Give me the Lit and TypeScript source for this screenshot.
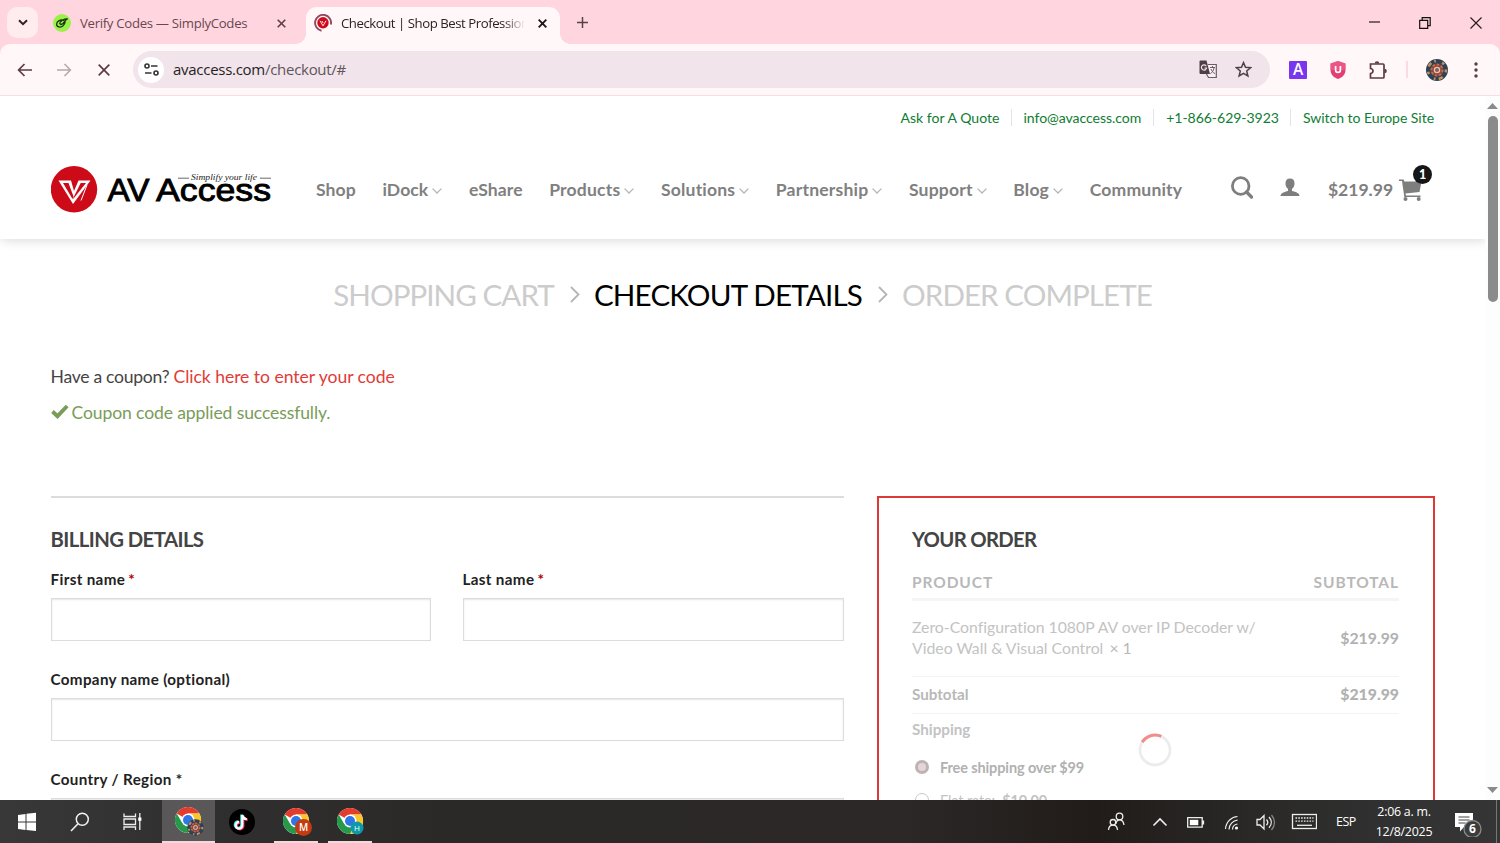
import { LitElement, html, css, svg } from "lit";
import { customElement } from "lit/decorators.js";

const NAV: [string, boolean][] = [
  ["Shop", false], ["iDock", true], ["eShare", false], ["Products", true], ["Solutions", true],
  ["Partnership", true], ["Support", true], ["Blog", true], ["Community", false],
];

const chevron = html`<svg class="chev" width="10" height="6" viewBox="0 0 10 6"><path d="M.6 .6 5 5 9.4 .6" fill="none" stroke="#b5b5b5" stroke-width="1.3"/></svg>`;

const mandala = (cx: number, cy: number, r: number) => svg`
  <circle cx=${cx} cy=${cy} r=${r} fill="#2b4258"/>
  <circle cx=${cx} cy=${cy} r=${r * 0.82} fill="none" stroke="#c98f55" stroke-width=${r * 0.24} stroke-dasharray=${`${r * 0.22} ${r * 0.5} ${r * 0.4} ${r * 0.3} ${r * 0.15} ${r * 0.6}`}/>
  <circle cx=${cx} cy=${cy} r=${r * 0.6} fill="#8c4638"/>
  <circle cx=${cx} cy=${cy} r=${r * 0.5} fill="none" stroke="#b8705a" stroke-width=${r * 0.18} stroke-dasharray=${`${r * 0.2} ${r * 0.18}`}/>
  <circle cx=${cx} cy=${cy} r=${r * 0.24} fill="#8a5a63" stroke="#ecc3a6" stroke-width=${r * 0.12}/>`;

const chromeLogo = svg`
  <circle cx="13" cy="13" r="13" fill="#fff"/>
  <path d="M13 13 1.74 6.5A13 13 0 0 1 24.26 6.5L13 6.5Z" fill="#e33b2e"/>
  <path d="M1.74 6.5A13 13 0 0 0 13 26L18.6 16.2 13 13 7.4 16.2Z" fill="#27994a"/>
  <path d="M24.26 6.5A13 13 0 0 1 13 26L18.6 16.2 18 8 13 6.5Z" fill="#fcc629"/>
  <circle cx="13" cy="13" r="6.5" fill="#fff"/>
  <circle cx="13" cy="13" r="5" fill="#2f76e6"/>`;

@customElement("browser-frame")
class BrowserFrame extends LitElement {
  static styles = css`
    :host { display: block; font-family: "Open Sans", "Noto Sans", sans-serif; color: #3c3035; }
    svg { display: block; flex: none; }
    .strip { height: 44px; background: #ffd6df; display: flex; align-items: flex-start; }
    .drop { width: 31px; height: 31px; margin: 7px 0 0 7px; border-radius: 10px; background: #ffecef; display: grid; place-items: center; }
    .tab { display: flex; align-items: center; height: 37px; margin-top: 7px; font-size: 13.2px; box-sizing: border-box; }
    .tab.idle { width: 266px; padding: 0 0 5px 15px; color: #6a4650; }
    .tab.idle .label { width: 197px; margin-left: 9px; letter-spacing: -0.31px; }
    .tab.live { width: 254px; margin-left: 2px; background: #fff7f8; border-radius: 11px 11px 0 0; padding: 0 0 5px 8px; position: relative; color: #2a2225; }
    .tab.live::before, .tab.live::after { content: ""; position: absolute; bottom: 0; width: 10px; height: 10px; }
    .tab.live::before { left: -10px; background: radial-gradient(circle at 0 0, transparent 9.5px, #fff7f8 10px); }
    .tab.live::after { right: -10px; background: radial-gradient(circle at 100% 0, transparent 9.5px, #fff7f8 10px); }
    .tab.live .label { width: 184px; margin: 0 13px 0 9px; letter-spacing: -0.46px; overflow: hidden; -webkit-mask: linear-gradient(90deg, #000 162px, transparent 184px); }
    .label { white-space: nowrap; line-height: 20px; }
    .plus { margin: 17px 0 0 17px; }
    .window { margin: 16px 18.500px 0 auto; display: flex; gap: 39px; align-items: center; }
    .barwrap { background: #ffd6df; }
    .bar { height: 51px; background: #fff7f8; border-bottom: 1px solid #f6dde1; display: flex; align-items: center; border-radius: 10px 10px 0 0; }
    .back { margin-left: 17px; }
    .fwd { margin-left: 25px; }
    .stop { margin-left: 26px; }
    .omni { margin-left: 23px; width: 1137px; height: 37px; border-radius: 19px; background: #f1e4ea; display: flex; align-items: center; box-sizing: border-box; padding: 0 18px 0 5px; }
    .site { width: 26px; height: 26px; border-radius: 50%; background: #fff; display: grid; place-items: center; }
    .url { margin-left: 9px; font-size: 15px; letter-spacing: -0.28px; line-height: 20px; color: #62545c; margin-top: -1px; }
    .url b { font-weight: 400; color: #261f24; }
    .gt { margin-left: auto; }
    .star { margin-left: 17px; }
    .exta { margin-left: 19px; } .extu { margin-left: 23px; } .extp { margin-left: 23px; }
    .sep { width: 2px; height: 17px; background: #ffd9e0; margin: 0 18px 0 18px; }
    .more { margin-left: 26px; }
  `;
  render() {
    return html`
      <div class="strip">
        <div class="drop"><svg width="10" height="7" viewBox="0 0 10 7"><path d="M1 1.2 5 5.2 9 1.2" fill="none" stroke="#2d2226" stroke-width="2"/></svg></div>
        <div class="tab idle">
          <svg width="18" height="18" viewBox="0 0 18 18"><circle cx="9" cy="9" r="9" fill="#9cf04a"/><path d="M11.200 6.400C7.800 4.900 3.600 7.200 3.600 10.300c0 3 4.400 3.600 6.400 1.600 1.300-1.300 2-3 2.300-4.600M6.300 9.300l1.900 1.300c1.500-.6 3-2.200 4-4l2.200-1.800-2.700.4c-2 .6-3.900 2-5 3.500" fill="none" stroke="#17330f" stroke-width="1.300" stroke-linejoin="round"/></svg>
          <span class="label">Verify Codes — SimplyCodes</span>
          <svg width="9" height="9" viewBox="0 0 9 9"><path d="m.7.7 7.600 7.600M8.300.7.7 8.300" stroke="#5f3e48" stroke-width="1.600"/></svg>
        </div>
        <div class="tab live">
          <svg width="18" height="18" viewBox="0 0 18 18"><path d="M7.500 16.700A8 8 0 1 1 16.900 10.500" fill="none" stroke="#8d4a60" stroke-width="1.900"/><circle cx="9" cy="8.800" r="5.700" fill="#cf0a1a"/><path d="m6 6.800 3 5 3-5M8 7l1 2" fill="none" stroke="#fff" stroke-width=".9"/></svg>
          <span class="label">Checkout | Shop Best Professional AV</span>
          <svg width="9" height="9" viewBox="0 0 9 9"><path d="m.7.7 7.600 7.600M8.300.7.7 8.300" stroke="#1d1719" stroke-width="1.900"/></svg>
        </div>
        <svg class="plus" width="11" height="11" viewBox="0 0 11 11"><path d="M5.500 0v11M0 5.500h11" stroke="#59404a" stroke-width="1.500"/></svg>
        <div class="window">
          <svg width="11" height="13" viewBox="0 0 11 13"><path d="M0 6h11" stroke="#221a1d" stroke-width="1.200"/></svg>
          <svg width="12" height="12" viewBox="0 0 12 12"><path d="M.7 3.300h8v8h-8zM3.200 3.200V.7h8v8H8.800" fill="none" stroke="#111" stroke-width="1.200"/></svg>
          <svg width="12" height="12" viewBox="0 0 12 12"><path d="m.5.5 11 11M11.500.5l-11 11" stroke="#221a1d" stroke-width="1.100"/></svg>
        </div>
      </div>
      <div class="barwrap"><div class="bar">
        <svg class="back" width="15" height="14" viewBox="0 0 15 14"><path d="M7.500 1 1.600 7l5.900 6M2 7h13" fill="none" stroke="#5c3b46" stroke-width="1.700"/></svg>
        <svg class="fwd" width="15" height="14" viewBox="0 0 15 14"><path d="M7.500 1l5.900 6-5.900 6M13 7H0" fill="none" stroke="#b7a8ad" stroke-width="1.600"/></svg>
        <svg class="stop" width="12" height="12" viewBox="0 0 12 12"><path d="m.7.7 10.600 10.600M11.300.7.7 11.300" stroke="#5c3b46" stroke-width="1.700"/></svg>
        <div class="omni">
          <div class="site"><svg width="15" height="13" viewBox="0 0 15 13"><circle cx="3" cy="3" r="2" fill="none" stroke="#333" stroke-width="1.600"/><circle cx="12" cy="10" r="2" fill="none" stroke="#333" stroke-width="1.600"/><path d="M7 3h6.500M1 10h6.500" stroke="#333" stroke-width="1.700"/></svg></div>
          <span class="url"><b>avaccess.com</b>/checkout/#</span>
          <svg class="gt" width="19" height="19" viewBox="0 0 19 19"><path d="M9 4.500h8.300v13H9.500L7.500 14" fill="#f8eff3" stroke="#6e5c64" stroke-width="1.200"/><path d="M1.500.5h6l3.500 13.500H1.500A1 1 0 0 1 .5 13V1.500a1 1 0 0 1 1-1Z" fill="#503e47"/><path d="M7.300 6.200A2.600 2.600 0 1 0 7.600 8H5.400" fill="none" stroke="#f1e4ea" stroke-width="1.200"/><path d="M11 7.500h5M13.500 6v1.500M15 8c-.5 2.700-2 4.700-3.700 5.800M12 9c.7 2 2.200 3.700 4 4.600" fill="none" stroke="#6e5c64"/></svg>
          <svg class="star" width="17" height="17" viewBox="0 0 17 17"><path d="m8.500 1.600 2 4.700 5.100.4-3.900 3.300 1.200 5-4.400-2.700L4.100 15l1.200-5L1.400 6.700l5.100-.4Z" fill="none" stroke="#51404a" stroke-width="1.500"/></svg>
        </div>
        <svg class="exta" width="18" height="18" viewBox="0 0 18 18"><rect width="18" height="18" rx="1" fill="#7a35ee"/><text x="9" y="14.300" text-anchor="middle" font-family="Open Sans, sans-serif" font-size="15.500" font-weight="600" fill="#fff">A</text></svg>
        <svg class="extu" width="16" height="18" viewBox="0 0 16 18"><path d="m8 0 7.500 2.500V9c0 5-4 7.700-7.500 9C4.500 16.700.5 14 .5 9V2.500Z" fill="#e23f75"/><path d="M8 0 .5 2.500V9h15V2.500Z" fill="#f0688f" opacity=".6"/><path d="M5.600 5v4a2.400 2.400 0 0 0 4.800 0V5" fill="none" stroke="#fff" stroke-width="1.700"/></svg>
        <svg class="extp" width="19" height="18" viewBox="0 0 19 18"><path d="M1.500 3h12.500a1 1 0 0 1 1 1v12a1 1 0 0 1-1 1H1.500v-4.500a2.500 2.500 0 0 0 0-5Z" fill="none" stroke="#5c3b46" stroke-width="1.700"/><path d="M5.700 2.500a2.300 2.300 0 0 1 4.600 0ZM15.500 7.700a2.300 2.300 0 0 1 0 4.600Z" fill="#5c3b46"/></svg>
        <div class="sep"></div>
        <svg width="22" height="22" viewBox="0 0 22 22">${mandala(11, 11, 11)}</svg>
        <svg class="more" width="4" height="16" viewBox="0 0 4 16"><g fill="#5c3b46"><circle cx="2" cy="2" r="1.700"/><circle cx="2" cy="8" r="1.700"/><circle cx="2" cy="14" r="1.700"/></g></svg>
      </div></div>`;
  }
}

@customElement("shop-header")
class ShopHeader extends LitElement {
  static styles = css`
    :host { display: block; height: 143px; background: #fff; box-shadow: 1px 1px 11px rgba(0,0,0,.16); position: relative; font-family: Lato, sans-serif; }
    svg { display: block; flex: none; }
    .top { height: 43px; padding-bottom: 1px; box-sizing: border-box; margin-bottom: 1px; display: flex; justify-content: flex-end; align-items: center; padding-right: 51px; }
    .top span { font-size: 14.05px; line-height: 17px; color: #0f7d33; letter-spacing: -0.05px; white-space: nowrap; }
    .top span + span { margin-left: 11px; padding-left: 12px; border-left: 1px solid #e4e4e4; }
    .top span:first-child { letter-spacing: 0.02px; }
    .top span:nth-child(3) { margin-left: 12px; }
    .main { height: 98px; display: flex; align-items: center; padding-left: 51px; }
    .logo { width: 265px; }
    .nav { display: flex; height: 98px; align-items: center; padding-top: 2px; box-sizing: border-box; }
    .item { display: flex; align-items: center; margin-right: 26.6px; font-size: 17.57px; letter-spacing: 0.18px; font-weight: 700; color: #808080; line-height: 22px; white-space: nowrap; }
    .item:nth-child(-n+3) { letter-spacing: 0.08px; }
    .chev { margin: 1px 0 0 4px; }
    .search { margin: -3px 0 0 22px; }
    .user { margin: -3px 0 0 27px; }
    .cash { margin: 2px 0 0 28px; font-size: 17.57px; font-weight: 700; color: #808080; line-height: 22px; }
    .cart { margin: 2px 0 0 6px; position: relative; }
    .badge { position: absolute; left: 14px; top: -14px; width: 19px; height: 19px; border-radius: 50%; background: #161616; color: #fff; font-size: 12.500px; font-weight: 900; line-height: 19px; text-align: center; }
  `;
  render() {
    return html`
      <div class="top"><span>Ask for A Quote</span><span>info@avaccess.com</span><span>+1-866-629-3923</span><span>Switch to Europe Site</span></div>
      <div class="main">
        <svg class="logo" width="265" height="50" viewBox="0 0 265 50">
          <circle cx="23" cy="25.300" r="23.200" fill="#cc0a18"/>
          <path d="M7.500 16.500h12.500l3 10.500 4.500-10.500H39.500L22 40ZM12 19 21.500 35l1-2.500L17.500 19ZM29.700 19 22.500 33.500 21.800 35.500 35 19Z" fill="#fff" fill-rule="evenodd"/>
          <path d="m36 21-6 15.500" stroke="#fff" stroke-width="1" fill="none"/>
          <g font-family="Liberation Sans, sans-serif" font-size="32" font-weight="400" fill="#000" stroke="#000" stroke-width=".9">
            <text x="56.500" y="36.500" textLength="42" lengthAdjust="spacingAndGlyphs">AV</text>
            <text x="105" y="36.500" textLength="115" lengthAdjust="spacingAndGlyphs">Access</text>
          </g>
          <text x="140" y="16.300" font-family="Liberation Serif, serif" font-style="italic" font-size="7.500" textLength="66" lengthAdjust="spacingAndGlyphs" fill="#222">Simplify your life</text>
          <path d="M127 14.200h11M209 14.200h11" stroke="#444" stroke-width=".8"/>
        </svg>
        <div class="nav">${NAV.map(([t, c]) => html`<div class="item">${t}${c ? chevron : ""}</div>`)}</div>
        <svg class="search" width="22" height="23" viewBox="0 0 22 23"><circle cx="9.700" cy="10" r="8.300" fill="none" stroke="#7e7e7e" stroke-width="2.800"/><path d="m15.500 16 5 5" stroke="#7e7e7e" stroke-width="3.300" stroke-linecap="round"/></svg>
        <svg class="user" width="20" height="19" viewBox="0 0 20 19"><path d="M10 .5c3 0 4.500 1.800 4.500 5 0 2.400-1 4.300-2.500 5.300v2.100c3.500.7 7.500 2 7.500 5.100H.5C.5 15 4.500 13.600 8 12.900v-2.100C6.500 9.800 5.500 7.900 5.500 5.500c0-3.200 1.500-5 4.500-5Z" fill="#7e7e7e"/></svg>
        <span class="cash">$219.99</span>
        <div class="cart"><svg width="23" height="22" viewBox="0 0 23 22"><path d="M0 .5h4.700l.7 2H22.500l-2 10.500L6.500 14.500l.5 2h14.500v1.600H5.300L3 2H0Z" fill="#7e7e7e"/><circle cx="6.500" cy="20" r="2" fill="#7e7e7e"/><circle cx="19.700" cy="20" r="2" fill="#7e7e7e"/></svg><span class="badge">1</span></div>
      </div>`;
  }
}

@customElement("checkout-page")
class CheckoutPage extends LitElement {
  static styles = css`
    :host { display: block; font-family: Lato, sans-serif; color: #444; }
    svg { display: block; flex: none; }
    .crumbs { display: flex; justify-content: center; align-items: center; margin-top: 35px; height: 40px; font-size: 29.6px; color: #ccc; letter-spacing: -0.95px; white-space: nowrap; }
    .crumbs b { font-weight: 400; color: #000; letter-spacing: -0.82px; }
    .crumbs svg { margin: 1px 14px 0 16px; }
    .notes { padding: 51px 51px 0 50.5px; font-size: 17.57px; line-height: 24px; }
    .ask { letter-spacing: -0.27px; }
    .red { color: #e03c38; letter-spacing: -0.04px; }
    .ok { display: flex; margin-top: 12px; color: #7a9c59; gap: 3px; letter-spacing: -0.12px; }
    .ok svg { margin-top: 3px; }
    .cols { display: flex; margin: 71px 50px 0 51px; gap: 33px; align-items: flex-start; }
    .form { width: 793px; border-top: 2px solid #dcdcdc; }
    h3 { margin: 0 0 0 -0.5px; font-size: 20.3px; line-height: 26px; font-weight: 700; color: #444; letter-spacing: -0.56px; }
    .form h3 { margin-top: 28px; }
    .row { display: grid; grid-template-columns: 380px 381px; gap: 32px; }
    .field { margin-bottom: 28px; }
    .form h3 + .row { margin-top: 17px; }
    .label { font-size: 15.2px; line-height: 20px; font-weight: 700; color: #222; display: block; letter-spacing: 0.35px; margin-left: -0.5px; }
    .req { color: #b20000; margin-left: -1px; }
    .input { height: 43px; box-sizing: border-box; border: 1px solid #dcdcdc; box-shadow: inset 0 1px 2px rgba(0,0,0,.1); margin-top: 9px; }
    .order { flex: 1; border: 2px solid #dd3a37; padding: 28px 34px 0 33px; height: 400px; box-sizing: border-box; position: relative; }
    .order h3 { letter-spacing: -0.7px; margin-left: 0; }
    .line { display: flex; justify-content: space-between; align-items: center; box-sizing: border-box; font-size: 15.800px; }
    .head { height: 42px; padding-top: 6px; margin-top: 7px; border-bottom: 3px solid #f5f5f5; font-weight: 700; color: #b8b8b8; letter-spacing: 0.9px; font-size: 15.500px; }
    .prod { height: 76px; padding-bottom: 3px; border-bottom: 1px solid #f3f3f3; color: #c3c3c3; line-height: 21px; }
    .line b { color: #b1b1b1; }
    .name { letter-spacing: -0.01px; }
    .qty { color: #b8b8b8; margin-left: -2px; }
    .sub { height: 37px; padding-bottom: 3px; border-bottom: 1px solid #f3f3f3; font-weight: 700; color: #b8b8b8; }
    .sub span, .ship { font-size: 15.200px; }
    .ship { font-weight: 700; color: #c3c3c3; line-height: 20px; margin-top: 5px; }
    .opt { display: flex; align-items: center; gap: 11px; margin-left: 3px; height: 20px; font-size: 14.500px; font-weight: 700; color: #b1b1b1; white-space: nowrap; letter-spacing: -0.12px; }
    .opt.first { margin-top: 18px; }
    .opt.second { margin-top: 13px; font-weight: 400; color: #c3c3c3; }
    .dot { width: 14px; height: 14px; box-sizing: border-box; border: 3px solid #bdb3b4; border-radius: 50%; background: #e5d5d7; }
    .dot.off { border: 1px solid #c8c8c8; background: #fff; }
    .spin { position: absolute; left: 258.500px; top: 235px; }
  `;
  render() {
    const gt = html`<svg width="10" height="17" viewBox="0 0 10 17"><path d="m1 1 7.500 7.500L1 16" fill="none" stroke="#b5b5b5" stroke-width="1.800"/></svg>`;
    return html`
      <div class="crumbs"><span>SHOPPING CART</span>${gt}<b>CHECKOUT DETAILS</b>${gt}<span>ORDER COMPLETE</span></div>
      <div class="notes">
        <div><span class="ask">Have a coupon? </span><span class="red">Click here to enter your code</span></div>
        <div class="ok"><svg width="18" height="15" viewBox="0 0 18 15"><path d="m1.500 7.500 5 4.700L16.200 2" fill="none" stroke="#7a9c59" stroke-width="3.900"/></svg>Coupon code applied successfully.</div>
      </div>
      <div class="cols">
        <div class="form">
          <h3>BILLING DETAILS</h3>
          <div class="row">
            <div class="field"><span class="label">First name <span class="req">*</span></span><div class="input"></div></div>
            <div class="field"><span class="label">Last name <span class="req">*</span></span><div class="input"></div></div>
          </div>
          <div class="field"><span class="label">Company name (optional)</span><div class="input"></div></div>
          <div class="field"><span class="label">Country / Region *</span><div class="input"></div></div>
        </div>
        <div class="order">
          <h3>YOUR ORDER</h3>
          <div class="line head"><span>PRODUCT</span><span>SUBTOTAL</span></div>
          <div class="line prod"><span class="name">Zero-Configuration 1080P AV over IP Decoder w/<br>Video Wall &amp; Visual Control&nbsp; <span class="qty">× 1</span></span><b>$219.99</b></div>
          <div class="line sub"><span>Subtotal</span><b>$219.99</b></div>
          <div class="ship">Shipping</div>
          <div class="opt first"><i class="dot"></i><span>Free shipping over $99</span></div>
          <div class="opt second"><i class="dot off"></i><span>Flat rate: &nbsp;<b>$10.00</b></span></div>
          <svg class="spin" width="34" height="34" viewBox="0 0 34 34"><circle cx="17" cy="17" r="15" fill="none" stroke="#ececec" stroke-width="2.800"/><path d="M4.200 9.200A15 15 0 0 1 23.300 3.400" fill="none" stroke="#f08e8c" stroke-width="3.200"/></svg>
        </div>
      </div>`;
  }
}

@customElement("task-bar")
class TaskBar extends LitElement {
  static styles = css`
    :host { display: flex; height: 43px; background: linear-gradient(90deg, #383838, #302f2f 14%, #2b2928 30%, #2b2827 60%, #211c1a 73%, #292827 83%, #333 95%, #353535); color: #fff; font-family: "Open Sans", "Noto Sans", sans-serif; align-items: center; justify-content: space-between; }
    svg { display: block; flex: none; }
    .left { display: flex; height: 43px; align-items: center; }
    .app { height: 43px; width: 44px; margin-left: 10px; padding: 3px 0 0 2px; box-sizing: border-box; display: grid; place-items: center; border-bottom: 2px solid transparent; }
    .run { border-bottom-color: #f3dad8; }
    .now { width: 53px; margin-left: 0; padding-left: 3px; background: #595757; }
    .tik { margin-left: 5px; padding-left: 0; }
    .right { display: flex; height: 43px; align-items: center; }
    .esp { font-size: 12.500px; letter-spacing: -0.5px; margin-left: 19px; width: 21px; }
    .clock { margin-left: 16px; width: 62px; text-align: center; font-size: 12.4px; line-height: 20px; letter-spacing: -0.25px; white-space: nowrap; }
    .bell { margin-left: 20px; }
    .edge { width: 1px; height: 43px; background: #777; margin: 0 3px 0 14px; }
  `;
  render() {
    return html`
      <div class="left">
        <svg width="162" height="43" viewBox="0 0 162 43">
          <path d="m18 15 7.500-1v7.500H18ZM26.500 13.800 36 12.700v8.800h-9.500ZM18 22.500h7.500V30L18 29ZM26.500 22.500H36V31l-9.500-1.100Z" fill="#fff"/>
          <circle cx="82.300" cy="19.300" r="6" fill="none" stroke="#f2f2f2" stroke-width="1.500"/><path d="m78 23.700-7 7.300" stroke="#f2f2f2" stroke-width="1.600"/>
          <path d="M124 13.500v3h11.500v-3M124 30v-3h11.500v3M124 19h11.500v5.500H124ZM139.800 13v17" fill="none" stroke="#eee" stroke-width="1.300"/><path d="M138.200 17.500h3.200v3.300h-3.200z" fill="#fff"/>
        </svg>
        <div class="app now run"><svg width="30" height="30" viewBox="0 0 30 30">${chromeLogo}${mandala(20.500, 20.500, 8.300)}</svg></div>
        <div class="app tik"><svg width="26" height="26" viewBox="0 0 26 26"><circle cx="13" cy="13" r="13" fill="#000"/><g fill="none" stroke-width="2.500"><path d="M13.300 6v10.300a3.300 3.300 0 1 1-3.300-3.300M13.300 6c.4 2.500 2 4 4.500 4.200" stroke="#2af0ea" transform="translate(-.8 -.5)"/><path d="M13.300 6v10.300a3.300 3.300 0 1 1-3.300-3.300M13.300 6c.4 2.500 2 4 4.500 4.200" stroke="#fe2c55" transform="translate(.9 .6)"/><path d="M13.300 6v10.300a3.300 3.300 0 1 1-3.300-3.300M13.300 6c.4 2.500 2 4 4.500 4.200" stroke="#fff" stroke-width="2.300"/></g></svg></div>
        <div class="app run"><svg width="29" height="28" viewBox="0 0 29 28">${chromeLogo}<circle cx="20.500" cy="19.500" r="8.500" fill="#c43a11"/><text x="20.500" y="23.200" text-anchor="middle" font-size="10" font-weight="600" fill="#fff">M</text></svg></div>
        <div class="app run"><svg width="28" height="28" viewBox="0 0 28 28">${chromeLogo}<circle cx="20" cy="20" r="6.500" fill="#0d9aa8"/><text x="20" y="23" text-anchor="middle" font-size="8" fill="#fff">H</text></svg></div>
      </div>
      <div class="right">
        <svg width="212" height="43" viewBox="1105 800 212 43" fill="none" stroke="#eee" stroke-width="1.300">
          <circle cx="1119.500" cy="816.500" r="3.300"/><path d="M1116 823.500c1-5 7-5 8 1.500"/><circle cx="1113" cy="822.300" r="2.800"/><path d="M1108.500 830c.5-6.500 8.500-6.500 9 0"/>
          <path d="m1153.500 825.500 6.500-6.500 6.500 6.500" stroke-width="1.600"/>
          <path d="M1187.700 817.700h14.500v9.500h-14.500ZM1203.500 820.500v4"/><path d="M1189.800 819.800h8.500v5.400h-8.500z" fill="#fff" stroke="none"/>
          <circle cx="1236.500" cy="828" r="1.600" fill="#fff" stroke="none"/><path d="M1232.500 829.500c0-3 2-5 5-5.500M1229 829.500c0-5 4-9 8.500-9.300M1225.500 829c.5-7 6-12.300 12-12.500" stroke-width="1.200"/>
          <path d="M1257 819.500h3l4-4v13.500l-4-4h-3ZM1266.500 819.500c1.500 1.700 1.500 4 0 5.700M1269 817c3 3.200 3 7.500 0 10.700"/><path d="M1271.500 815c4 4.500 4 10.500 0 15" stroke="#888"/>
          <rect x="1292.500" y="814.500" width="24" height="14"/><path d="M1295.500 818h18M1295.500 821.200h18" stroke-dasharray="1.600 1.200"/><path d="M1297 825.300h15"/>
        </svg>
        <span class="esp">ESP</span>
        <div class="clock"><div>2:06 a. m.</div><div>12/8/2025</div></div>
        <svg class="bell" width="27" height="30" viewBox="0 0 27 30"><path d="M0 6h18v14h-9l-4 4.500V20H0Z" fill="#fff"/><path d="M3.500 10h11M3.500 13h11M3.500 16h7" stroke="#444" stroke-width="1.100"/><circle cx="17.500" cy="22" r="8.500" fill="#3c3c3c" stroke="#8b8b8b" stroke-width="1.300"/><text x="17.500" y="26.200" text-anchor="middle" font-size="12" font-weight="700" fill="#fff">6</text></svg>
        <i class="edge"></i>
      </div>`;
  }
}

@customElement("app-root")
class AppRoot extends LitElement {
  static styles = css`
    :host { display: flex; flex-direction: column; width: 1500px; height: 843px; overflow: hidden; background: #fff; }
    .view { display: flex; height: 704px; overflow: hidden; }
    .page { width: 1485px; height: 704px; overflow: hidden; }
    .scroll { width: 15px; display: flex; flex-direction: column; align-items: center; background: #fdfdfd; }
    .thumb { width: 10px; height: 186px; margin-top: 7px; border-radius: 5px; background: #8b8b8b; }
    .up { margin-top: 7px; }
    .down { margin: auto 0 7px; }
  `;
  render() {
    return html`
      <browser-frame></browser-frame>
      <div class="view">
        <div class="page"><shop-header></shop-header><checkout-page></checkout-page></div>
        <div class="scroll">
          <svg class="up" width="11" height="6"><path d="M0 6 5.500 0 11 6Z" fill="#8b8b8b"/></svg>
          <div class="thumb"></div>
          <svg class="down" width="11" height="6"><path d="M0 0h11L5.500 6Z" fill="#8b8b8b"/></svg>
        </div>
      </div>
      <task-bar></task-bar>`;
  }
}
